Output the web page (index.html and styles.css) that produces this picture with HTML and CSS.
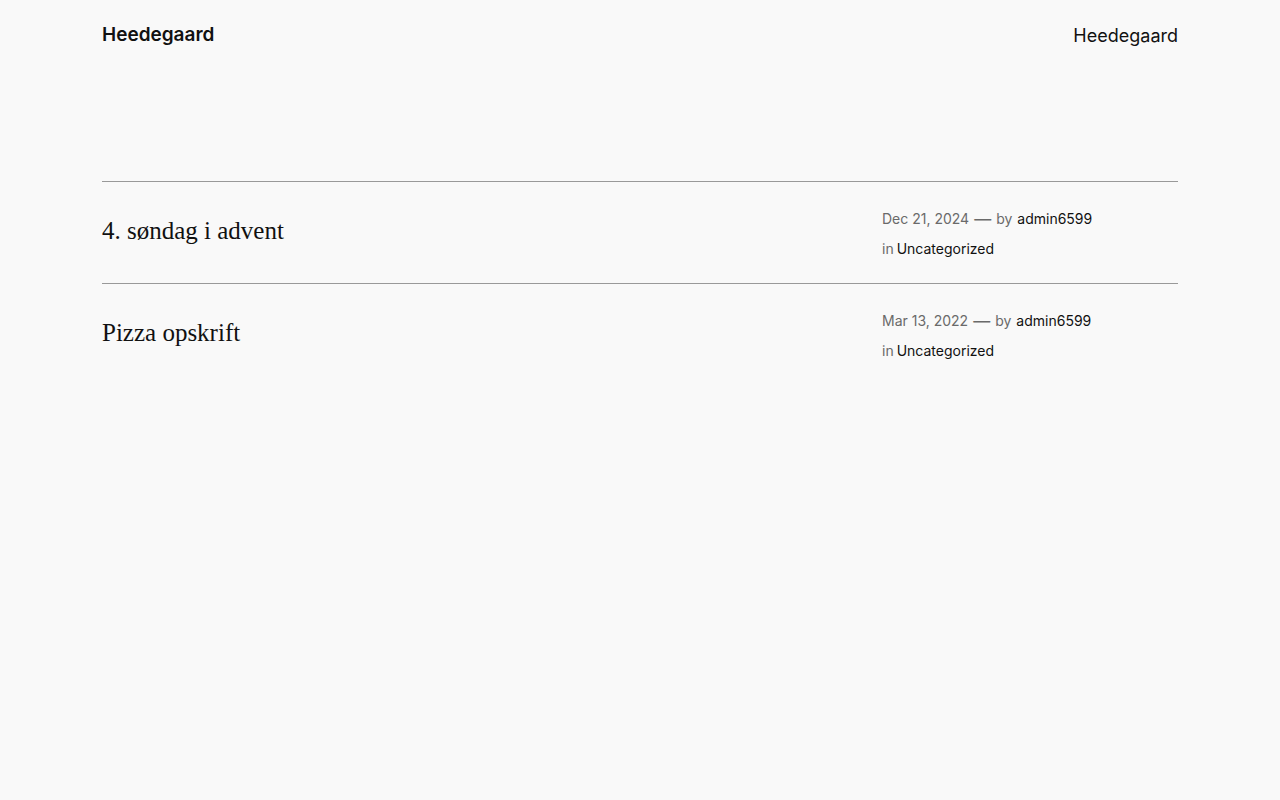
FILE: index.html
```html
<!DOCTYPE html>
<html>
<head>
  <meta charset="UTF-8">
  <title>Heedegaard</title>
  <link rel="stylesheet" href="styles.css">
</head>
<body>
  <header class="site-header">
    <a href="#" class="site-title">Heedegaard</a>
    <nav class="navbar">
      <a href="#">Heedegaard</a>
    </nav>
  </header>

  <main class="posts">
    <article class="post">
      <h2 class="post-title"><a href="#">4. søndag i advent</a></h2>
      <div class="post-meta">
        <div class="meta-line">
          <span class="date">Dec 21, 2024</span>
          <span class="dash">—</span>
          <span>by</span>
          <a href="#">admin6599</a>
        </div>
        <div class="meta-line cats">
          <span>in</span>
          <a href="#">Uncategorized</a>
        </div>
      </div>
    </article>
    <article class="post">
      <h2 class="post-title"><a href="#">Pizza opskrift</a></h2>
      <div class="post-meta">
        <div class="meta-line">
          <span class="date">Mar 13, 2022</span>
          <span class="dash">—</span>
          <span>by</span>
          <a href="#">admin6599</a>
        </div>
        <div class="meta-line cats">
          <span>in</span>
          <a href="#">Uncategorized</a>
        </div>
      </div>
    </article>
  </main>
</body>
</html>
```

FILE: styles.css
```css
* {
  padding: 0;
  margin: 0;
  box-sizing: border-box;
}

body {
  background-color: #f9f9f9;
  color: #111111;
  font-family: Inter, "Liberation Sans", sans-serif;
}

a {
  color: #111111;
  text-decoration: none;
}

.site-header {
  display: flex;
  justify-content: space-between;
  align-items: center;
  padding: 23px 102px 21px;
}

.site-title {
  font-size: 19px;
  font-weight: 600;
  line-height: 24px;
}

.navbar a {
  font-size: 18px;
  line-height: 24px;
  position: relative;
  top: 1px;
}

.posts {
  margin: 113px 102px 0;
}

.post {
  display: grid;
  grid-template-columns: 1fr 296px;
  column-gap: 32px;
  border-top: 1px solid #999999;
  padding: 22px 0 19px;
}

.post-title {
  font-family: "Liberation Serif", "DejaVu Serif", serif;
  font-weight: 400;
  font-size: 25px;
  line-height: 30px;
  padding-top: 12px;
}

.post-meta {
  font-size: 14px;
  color: #6a6a6a;
}

.meta-line {
  display: flex;
  gap: 5px;
  line-height: 30px;
}

.meta-line.cats {
  gap: 3px;
}

.dash {
  font-size: 17px;
}
```
